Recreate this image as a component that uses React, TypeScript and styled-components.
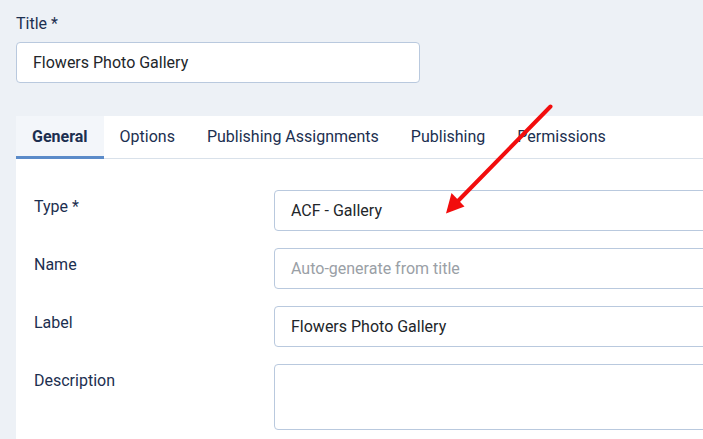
import React from "react";
import styled, { createGlobalStyle } from "styled-components";

const Global = createGlobalStyle`
  html, body { margin: 0; padding: 0; }
  body {
    background: #edf1f6;
    font-family: Roboto, "Noto Sans", sans-serif;
    overflow: hidden;
  }
`;

const Page = styled.div`
  position: relative;
  width: 703px;
  height: 439px;
  overflow: hidden;
  padding: 12px 0 0 16px;
  box-sizing: border-box;
`;

const TitleLabel = styled.label`
  display: block;
  font-size: 16px;
  line-height: 24px;
  color: #1c2f50;
  margin-bottom: 6px;
`;

const Input = styled.div<{ $w?: string; $h?: number; $placeholder?: boolean }>`
  box-sizing: border-box;
  width: ${(p) => p.$w ?? "100%"};
  height: ${(p) => p.$h ?? 41}px;
  background: #fff;
  border: 1px solid #b9c9de;
  border-radius: 4px;
  padding: 8px 16px;
  font-size: 16px;
  line-height: 24px;
  color: ${(p) => (p.$placeholder ? "#9aa0a6" : "#22262a")};
  white-space: nowrap;
`;

const Card = styled.div`
  margin-top: 33px;
  background: #fff;
  width: 720px;
  height: 340px;
`;

const TabBar = styled.div`
  display: flex;
  border-bottom: 1px solid #d9e1ea;
  height: 43px;
  box-sizing: border-box;
`;

const Tab = styled.div<{ $active?: boolean }>`
  padding: 0 16px;
  font-size: 16px;
  line-height: 42px;
  height: 43px;
  box-sizing: border-box;
  color: #1c2f50;
  font-weight: ${(p) => (p.$active ? 700 : 400)};
  background: ${(p) => (p.$active ? "#f3f6fa" : "transparent")};
  border-bottom: 3px solid ${(p) => (p.$active ? "#5b8bc9" : "transparent")};
  margin-bottom: -1px;
`;

const Form = styled.div`
  padding: 31px 0 0 18px;
  display: flex;
  flex-direction: column;
  gap: 17px;
`;

const Row = styled.div`
  display: grid;
  grid-template-columns: 240px 1fr;
  align-items: start;
`;

const RowLabel = styled.div`
  font-size: 16px;
  line-height: 24px;
  color: #1c2f50;
  padding-top: 5px;
`;

const Arrow = styled.svg`
  position: absolute;
  left: 0;
  top: 0;
  pointer-events: none;
`;

export default function App() {
  return (
    <>
      <Global />
      <Page>
        <TitleLabel>Title *</TitleLabel>
        <Input $w="404px">Flowers Photo Gallery</Input>
        <Card>
          <TabBar>
            <Tab $active>General</Tab>
            <Tab>Options</Tab>
            <Tab>Publishing Assignments</Tab>
            <Tab>Publishing</Tab>
            <Tab>Permissions</Tab>
          </TabBar>
          <Form>
            <Row>
              <RowLabel>Type *</RowLabel>
              <Input>ACF - Gallery</Input>
            </Row>
            <Row>
              <RowLabel>Name</RowLabel>
              <Input $placeholder>Auto-generate from title</Input>
            </Row>
            <Row>
              <RowLabel>Label</RowLabel>
              <Input>Flowers Photo Gallery</Input>
            </Row>
            <Row>
              <RowLabel>Description</RowLabel>
              <Input $h={66} />
            </Row>
          </Form>
        </Card>
        <Arrow width="703" height="439" viewBox="0 0 703 439">
          <line x1="550.5" y1="106.5" x2="458" y2="201" stroke="#f20d0d" strokeWidth="4" strokeLinecap="round" />
          <polygon points="446,213.5 451.5,193 464.5,206.5" fill="#f20d0d" />
        </Arrow>
      </Page>
    </>
  );
}
